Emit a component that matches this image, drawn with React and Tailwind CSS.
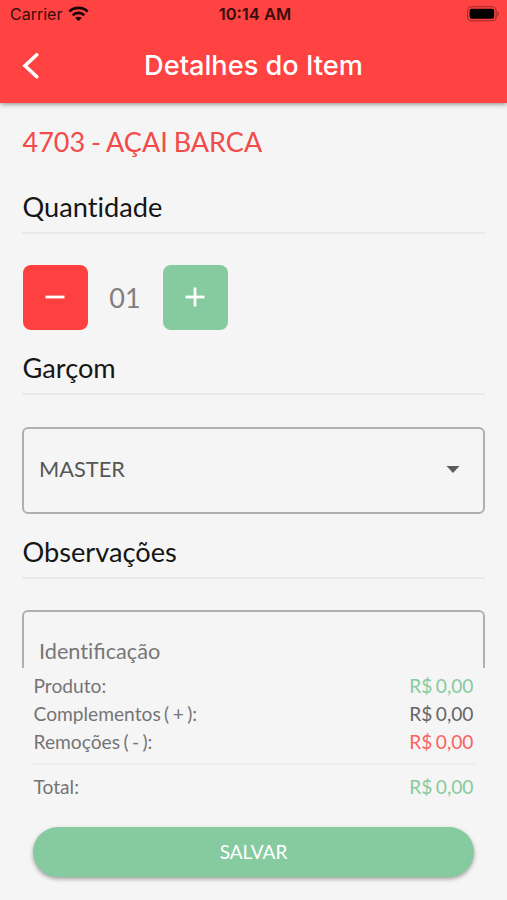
const StatusBar = () => {
	return (
		<div className="h-7 pl-[10px] pr-[7px] grid grid-cols-3 items-center text-[#380d0d] text-[16px] font-['Inter',sans-serif]">
			<div className="flex items-center gap-[6px] whitespace-nowrap">
				<span>Carrier</span>
				<WifiIcon />
			</div>
			<div className="pt-[1px] text-center text-[16.5px] font-semibold whitespace-nowrap">10:14 AM</div>
			<div className="flex justify-end">
				<BatteryIcon />
			</div>
		</div>
	);
};

const WifiIcon = () => {
	return (
		<svg width="21" height="16" viewBox="0 0 21 16" fill="none" className="text-[#1c0505]">
			<path d="M1.3 5.6C6.4 0.7 14.6 0.7 19.7 5.6" stroke="currentColor" strokeWidth="2.7" />
			<path d="M4.7 9.2C7.9 6.1 13.1 6.1 16.3 9.2" stroke="currentColor" strokeWidth="2.6" />
			<path d="M7.2 11.9C9 10.2 12 10.2 13.8 11.9L10.5 15.1Z" fill="currentColor" />
		</svg>
	);
};

const BatteryIcon = () => {
	return (
		<svg width="33" height="16" viewBox="0 0 33 16" fill="none">
			<rect x="0.6" y="0.8" width="28.6" height="14" rx="4" stroke="#a32a2a" strokeWidth="1.1" />
			<rect x="2.6" y="2.8" width="24.6" height="10" rx="2" fill="#000" />
			<path d="M30.6 5.6C32.4 6.4 32.4 9.2 30.6 10Z" fill="#a32a2a" />
		</svg>
	);
};

const Header = () => {
	return (
		<header className="h-[103px] shrink-0 bg-[#ff4242] shadow-[0_1px_5px_rgba(0,0,0,0.45)] z-10">
			<StatusBar />
			<div className="h-[75px] px-5 grid grid-cols-[40px_1fr_40px] items-center">
				<button aria-label="Voltar">
					<svg width="22" height="30" viewBox="0 0 22 30" fill="none">
						<path d="M16.8 3.8L5 14.8L16.8 25.8" stroke="#fff" strokeWidth="3.6" strokeLinecap="round" />
					</svg>
				</button>
				<h1 className="pt-[2px] text-center text-white text-[27.2px] font-medium whitespace-nowrap font-['Inter',sans-serif]">
					Detalhes do Item
				</h1>
			</div>
		</header>
	);
};

const SectionTitle = ({ children }) => {
	return (
		<h2 className="h-[52px] pt-[1px] pl-[0.5px] flex items-center text-[27.2px] text-[#151515] border-b-2 border-[#e9e9e9] [font-variant-ligatures:none]">
			{children}
		</h2>
	);
};

const QuantityButton = ({ plus }) => {
	return (
		<button
			className={`size-[65px] pb-[2px] rounded-[8px] flex items-center justify-center ${plus ? "bg-[#86cb9f]" : "bg-[#ff4040]"}`}
		>
			<svg width="20" height="20" viewBox="0 0 20 20" stroke="#fff" strokeWidth="2.8">
				<path d="M0.5 10H19.5" />
				{plus && <path d="M10 0.5V19.5" />}
			</svg>
		</button>
	);
};

const SummaryRow = ({ label, value, className }) => {
	return (
		<div className="h-[28.3px] px-[1.5px] flex items-center justify-between text-[19.2px] [word-spacing:-1.5px]">
			<span className="text-[#747474]">{label}</span>
			<span className={className}>{value}</span>
		</div>
	);
};

export default function App() {
	return (
		<div className="w-[507px] h-[900px] flex flex-col overflow-hidden bg-[#f5f5f5] font-['Lato',sans-serif]">
			<Header />

			<main className="h-[565px] shrink-0 overflow-hidden px-[22px]">
				<div className="h-[79px] pl-[0.5px] flex items-center text-[27px] text-[#f24b4b] whitespace-nowrap [word-spacing:-1px]">
					4703 - AÇAI BARCA
				</div>

				<SectionTitle>Quantidade</SectionTitle>
				<div className="pt-[31px] pb-[13px] pl-[0.5px] flex items-center">
					<QuantityButton />
					<span className="w-[75px] pt-[2px] text-center text-[27px] text-[#808080]">01</span>
					<QuantityButton plus />
				</div>

				<SectionTitle>Garçom</SectionTitle>
				<div className="mt-8 mb-[13px] h-[87px] pl-[15px] pr-[23px] flex items-center justify-between border-2 border-[#b0b0b0] rounded-[6px]">
					<span className="pb-[2px] text-[21.8px] text-[#565656]">MASTER</span>
					<svg width="14" height="7" viewBox="0 0 14 7" fill="#5c5c5c" className="mb-[2px]">
						<path d="M0.5 0H13.5L7 7Z" />
					</svg>
				</div>

				<SectionTitle>Observações</SectionTitle>
				<div className="mt-[31px] h-[86px] pl-[15px] pb-[3px] flex items-center border-2 border-[#b0b0b0] rounded-[6px]">
					<span className="text-[21.7px] text-[#777777]">
						<span className="[font-variant-ligatures:none]">Ident</span>ificação
					</span>
				</div>
			</main>

			<footer className="px-8 pt-[4px]">
				<SummaryRow label="Produto:" value="R$ 0,00" className="text-[#86cb9f]" />
				<SummaryRow label="Complementos ( + ):" value="R$ 0,00" className="text-[#666666]" />
				<SummaryRow label="Remoções ( - ):" value="R$ 0,00" className="text-[#f86464]" />
				<div className="mt-[6px] mb-[8px] border-t-2 border-[#ececec]" />
				<SummaryRow label="Total:" value="R$ 0,00" className="text-[#86cb9f]" />
				<div className="mt-[26px] px-[1px]">
					<button className="w-full h-[50px] rounded-full bg-[#86cb9f] text-white text-[19px] shadow-[0_2px_4px_rgba(0,0,0,0.35)]">
						SALVAR
					</button>
				</div>
			</footer>
		</div>
	);
}
